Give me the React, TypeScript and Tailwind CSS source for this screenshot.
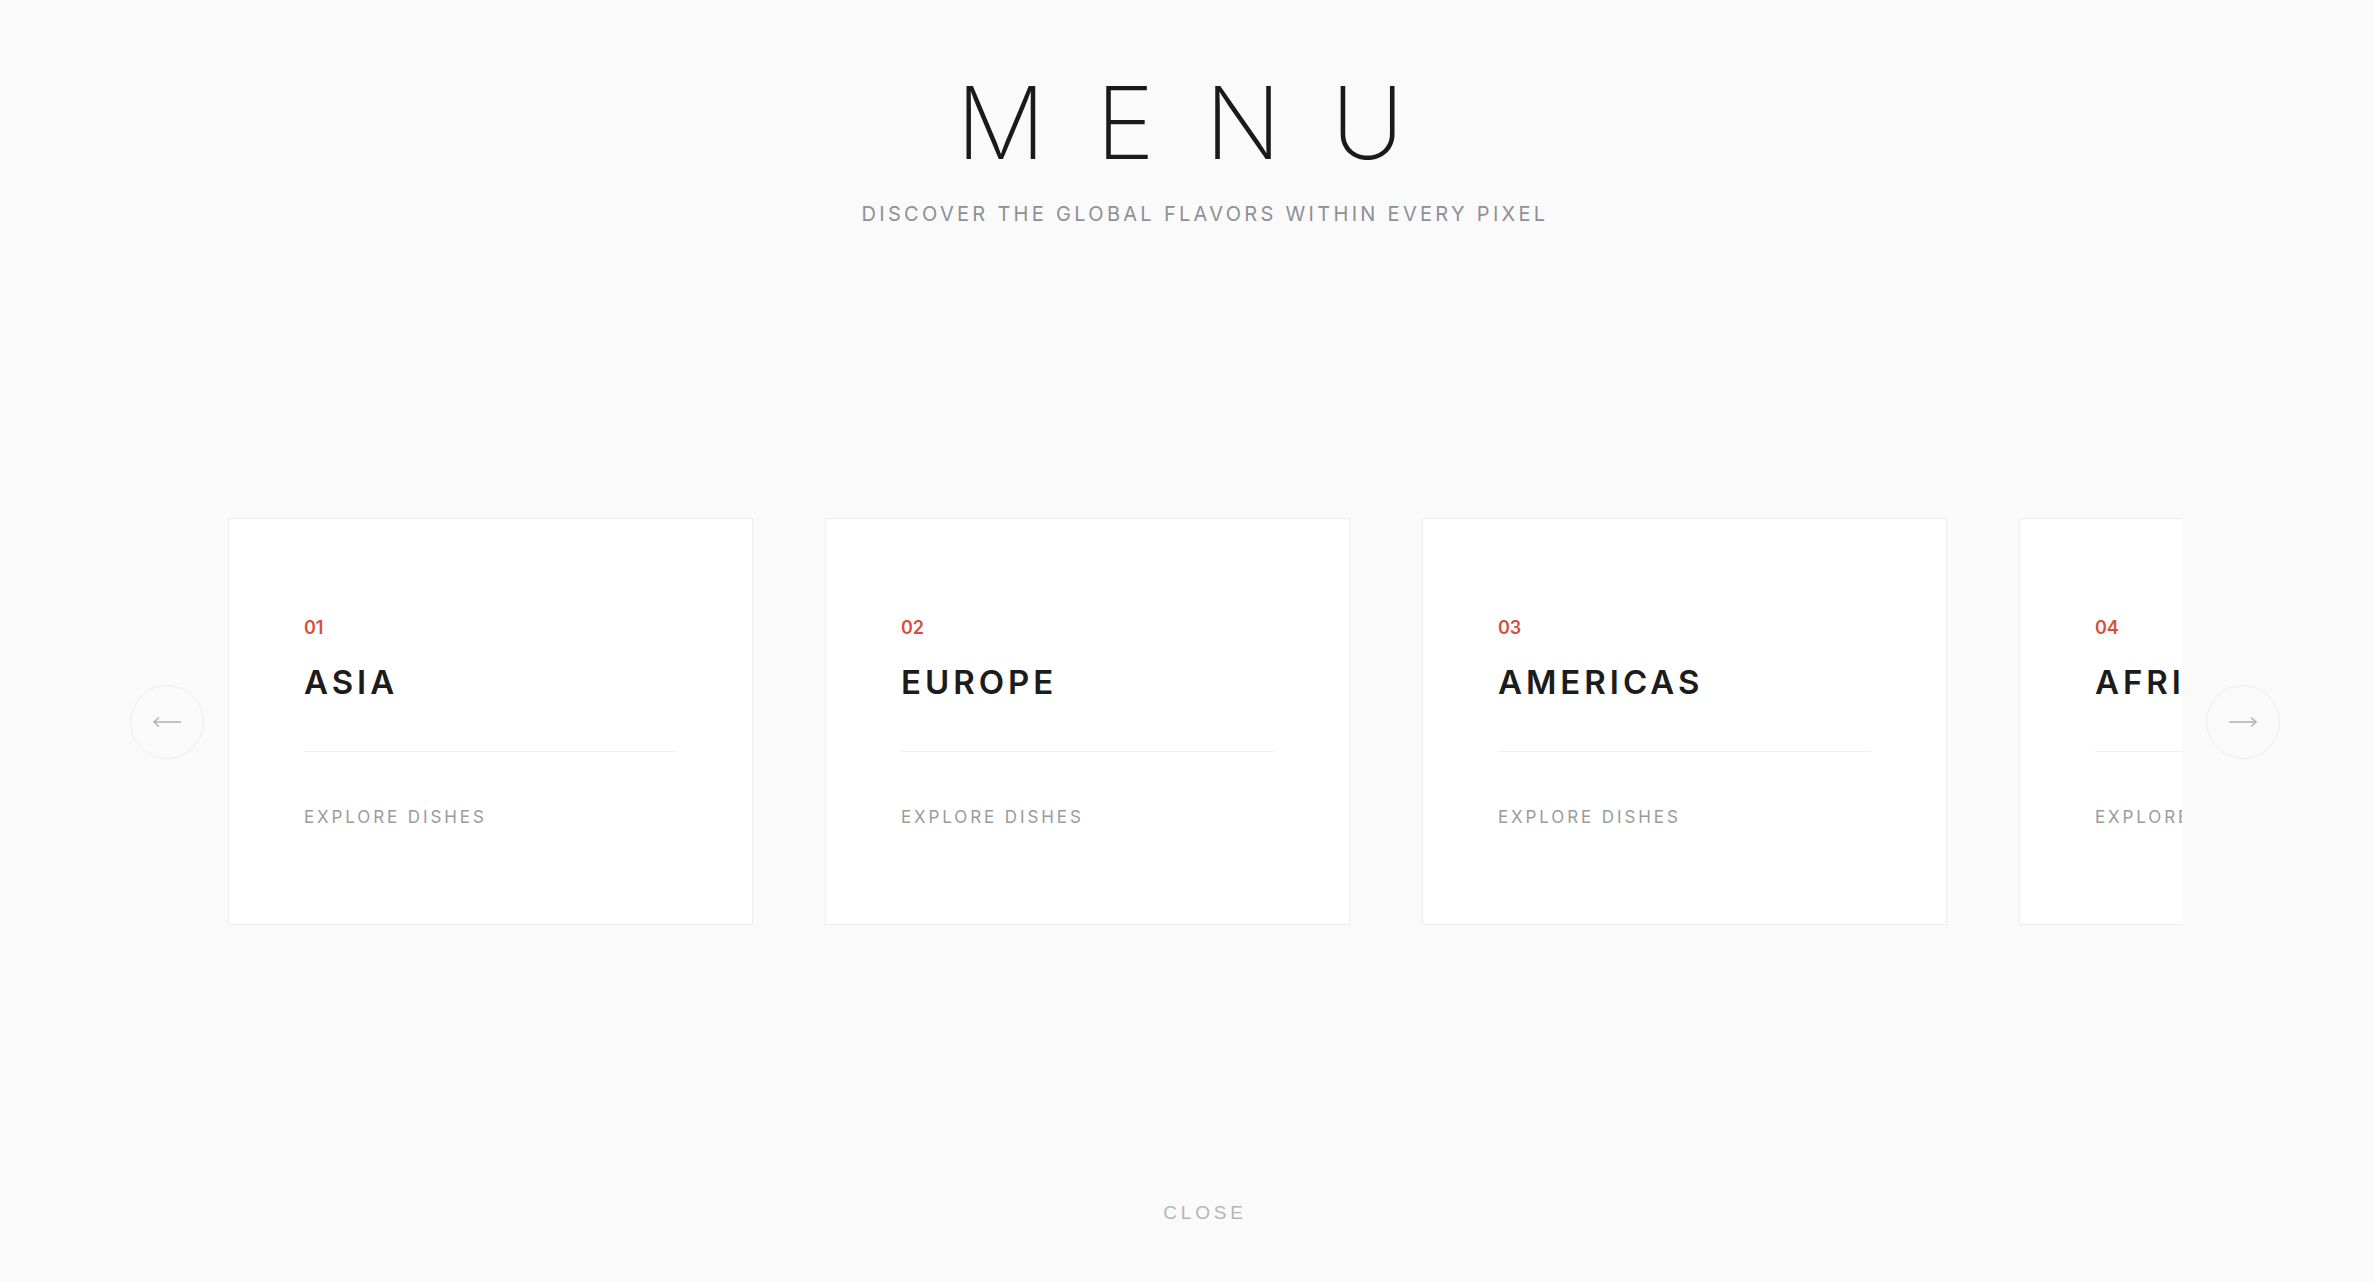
import React from 'react';

type Region = { num: string; name: string };

const regions: Region[] = [
  { num: '01', name: 'ASIA' },
  { num: '02', name: 'EUROPE' },
  { num: '03', name: 'AMERICAS' },
  { num: '04', name: 'AFRICA' },
  { num: '05', name: 'OCEANIA' },
];

const ArrowButton: React.FC<{ dir: 'left' | 'right' }> = ({ dir }) => (
  <button className="w-[74px] h-[74px] shrink-0 rounded-full border border-[#ededed] bg-[#fafafa] flex items-center justify-center">
    <svg width="30" height="12" viewBox="0 0 30 12" fill="none" stroke="#b3b3b3" strokeWidth="1.6">
      {dir === 'left' ? (
        <>
          <path d="M2 6 H29" />
          <path d="M7 1.5 L2 6 L7 10.5" />
        </>
      ) : (
        <>
          <path d="M1 6 H28" />
          <path d="M23 1.5 L28 6 L23 10.5" />
        </>
      )}
    </svg>
  </button>
);

const RegionCard: React.FC<{ region: Region }> = ({ region }) => (
  <div className="w-[525px] h-[407px] shrink-0 bg-white border border-[#ededed] px-[75px] pt-[100px]">
    <div className="text-[18px] leading-none font-semibold text-[#d6503d]">{region.num}</div>
    <div className="mt-[29px] text-[33px] leading-none font-semibold tracking-[0.12em] text-[#1c1c1c] whitespace-nowrap">
      {region.name}
    </div>
    <div className="mt-[52px] h-px bg-[#f1f1f1]" />
    <div className="mt-[57px] text-[17px] leading-none tracking-[0.17em] text-[#9b9b9b] whitespace-nowrap">
      EXPLORE DISHES
    </div>
  </div>
);

const App: React.FC = () => {
  return (
    <div
      className="w-full h-[1281px] bg-[#fafafa] pl-[36px] flex flex-col items-center overflow-hidden"
      style={{ fontFamily: 'Inter, "Noto Sans", sans-serif' }}
    >
      <h1 className="mt-[73px] text-[100px] leading-none font-extralight tracking-[0.5em] text-[#1a1a1a]">
        MENU
      </h1>
      <p className="mt-[31px] text-[20px] leading-none tracking-[0.165em] text-[#8d9096]">
        DISCOVER THE GLOBAL FLAVORS WITHIN EVERY PIXEL
      </p>

      <div className="mt-[294px] flex items-center gap-[24px]">
        <ArrowButton dir="left" />
        <div className="w-[1954px] overflow-hidden">
          <div className="flex gap-[72px]">
            {regions.map(r => (
              <RegionCard key={r.num} region={r} />
            ))}
          </div>
        </div>
        <ArrowButton dir="right" />
      </div>

      <button
        className="mt-[278px] text-[19px] leading-none tracking-[0.2em] text-[#b5b5b5]"
        style={{ fontFamily: '"Liberation Sans", Arial, sans-serif' }}
      >
        CLOSE
      </button>
    </div>
  );
};

export default App;
